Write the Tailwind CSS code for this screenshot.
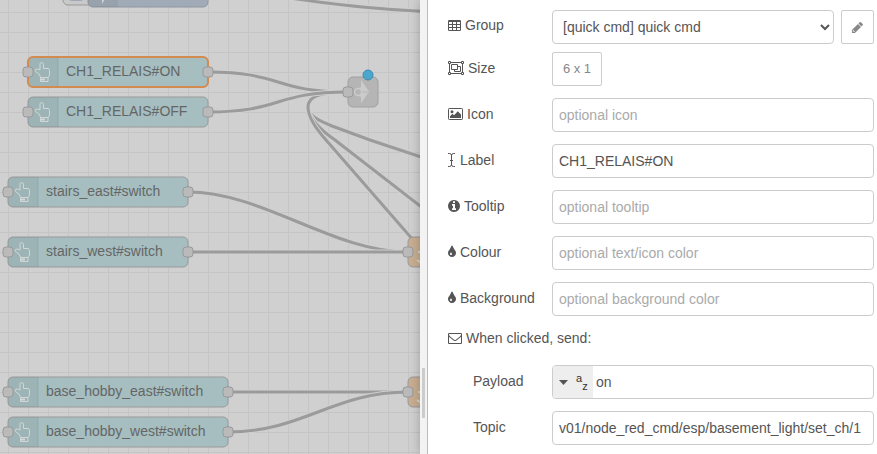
<!DOCTYPE html>
<html lang="en">
<head>
<meta charset="utf-8">
<meta name="viewport" content="width=device-width, initial-scale=1">
<title>Edit button node</title>
<script src="https://cdn.jsdelivr.net/npm/@tailwindcss/browser@4"></script>
</head>
<body class="bg-white font-['Liberation_Sans',Arial,sans-serif] text-sm leading-5 text-[#555]">
<div class="grid min-h-screen grid-cols-[minmax(0,420fr)_minmax(0,457fr)]">

  <!-- Flow canvas -->
  <main class="relative overflow-hidden bg-[#d0d0d0]" aria-label="Flow">
    <svg class="absolute inset-0 h-full w-full" font-size="14" fill="none">
      <defs>
        <pattern id="grid" x="8" y="12" width="20" height="20" patternUnits="userSpaceOnUse">
          <path d="M0 .5H20M.5 0V20" stroke="#c5c5c5"/>
        </pattern>
        <g id="port"><rect x="-5" y="-5" width="10" height="10" rx="3" fill="#bababa" stroke="#999"/></g>
        <g id="hand">
          <path d="M0 5a5 5 0 0 1 5-5H30V30H5a5 5 0 0 1-5-5Z" fill="#000" fill-opacity=".05"/>
          <path d="M30 .5V29.500" stroke="#000" stroke-opacity=".08"/>
          <path d="M12 13V7.200Q12 5.500 13.500 5.500T15.500 7.200V11.500H20Q21.500 12 21.500 13.500V18L20 20.500H12.700L11 17L7.500 14.500Q6.500 13 8 12.200Q10 11.700 12 13M12.500 20.500V24.500H20V20.500" stroke="#d2d7d7"/>
          <path d="M13 22.500H17" stroke="#d2d7d7" stroke-width="2"/>
        </g>
        <g id="node180"><rect width="180" height="30" rx="5" fill="#a6bec0" stroke="#999"/><use href="#hand"/></g>
        <g id="node220"><rect width="220" height="30" rx="5" fill="#a6bec0" stroke="#999"/><use href="#hand"/></g>
        <path id="w1" d="M290 -2Q355 8 424 11.500"/>
        <path id="w2" d="M348 92C318 92 308 97 308 107C308 116 320 121 332 126L370 140L424 158"/>
        <path id="w3" d="M348 92C318 92 308 97 308 107C308 118 322 131 335 140L424 209"/>
        <path id="w4" d="M348 92C318 92 308 97 308 107C308 118 318 131 326 140L414 241"/>
        <path id="w5" d="M208 72C283 72 273 92 348 92"/>
        <path id="w6" d="M208 112C283 112 273 92 348 92"/>
        <path id="w7" d="M188 192C263 192 333 252 408 252"/>
        <path id="w8" d="M188 252H408"/>
        <path id="w9" d="M228 392H408"/>
        <path id="w10" d="M228 432C303 432 333 392 408 392"/>
      </defs>
      <rect width="100%" height="100%" fill="url(#grid)"/>

      <!-- Wires: a background-coloured outline keeps crossings readable -->
      <g stroke="#d0d0d0" stroke-width="5"><use href="#w1"/><use href="#w2"/></g>
      <g stroke="#9b9b9b" stroke-width="3"><use href="#w1"/><use href="#w2"/></g>
      <use href="#w3" stroke="#d0d0d0" stroke-width="5"/><use href="#w3" stroke="#9b9b9b" stroke-width="3"/>
      <use href="#w4" stroke="#d0d0d0" stroke-width="5"/><use href="#w4" stroke="#9b9b9b" stroke-width="3"/>
      <use href="#w5" stroke="#d0d0d0" stroke-width="5"/><use href="#w5" stroke="#9b9b9b" stroke-width="3"/>
      <use href="#w6" stroke="#d0d0d0" stroke-width="5"/><use href="#w6" stroke="#9b9b9b" stroke-width="3"/>
      <use href="#w7" stroke="#d0d0d0" stroke-width="5"/><use href="#w7" stroke="#9b9b9b" stroke-width="3"/>
      <use href="#w8" stroke="#d0d0d0" stroke-width="5"/><use href="#w8" stroke="#9b9b9b" stroke-width="3"/>
      <use href="#w9" stroke="#d0d0d0" stroke-width="5"/><use href="#w9" stroke="#9b9b9b" stroke-width="3"/>
      <use href="#w10" stroke="#d0d0d0" stroke-width="5"/><use href="#w10" stroke="#9b9b9b" stroke-width="3"/>

      <!-- Inject node -->
      <rect x="63" y="-20" width="40" height="25" rx="5" fill="#c9c9c9" stroke="#999"/>
      <rect x="68" y="-16" width="16" height="17" rx="4" fill="#a0a9b3"/>
      <rect x="88" y="-23" width="120" height="30" rx="5" fill="#a0abb7" stroke="#8f969e"/>
      <path d="M88 -23H118V7H93a5 5 0 0 1-5-5Z" fill="#000" fill-opacity=".05"/>
      <path d="M102 -3H106L102 4Z" fill="#d2d5d8"/>

      <!-- Button nodes -->
      <use href="#node180" x="28" y="57"/>
      <rect x="28" y="57" width="180" height="30" rx="5" stroke="#d38b50" stroke-width="2"/>
      <use href="#node180" x="28" y="97"/>
      <use href="#node180" x="8" y="177"/>
      <use href="#node180" x="8" y="237"/>
      <use href="#node220" x="8" y="377"/>
      <use href="#node220" x="8" y="417"/>
      <g fill="#646666">
        <text x="66" y="76">CH1_RELAIS#ON</text>
        <text x="66" y="116">CH1_RELAIS#OFF</text>
        <text x="46" y="196">stairs_east#switch</text>
        <text x="46" y="256">stairs_west#switch</text>
        <text x="46" y="396">base_hobby_east#switch</text>
        <text x="46" y="436">base_hobby_west#switch</text>
      </g>

      <!-- Link node -->
      <rect x="348" y="77" width="30" height="30" rx="5" fill="#b5b5b5" stroke="#a0a0a0"/>
      <path d="M361 80L369 91.500L361 103.500V97L357 94.500V89.500L361 87Z" fill="#cbcbcb"/>
      <path d="M362 92H368" stroke="#b5b5b5"/>
      <circle cx="358" cy="92" r="3.500" fill="#b5b5b5" stroke="#cbcbcb" stroke-width="1.500"/>
      <circle cx="368" cy="75" r="5" fill="#4ba6cd" stroke="#3d8cb0"/>

      <!-- Function nodes -->
      <rect x="408" y="237" width="60" height="30" rx="5" fill="#c8ae92" stroke="#999"/>
      <rect x="408" y="377" width="60" height="30" rx="5" fill="#c8ae92" stroke="#999"/>
      <path d="M418 252h3M417 260l4 3M418 392h3M417 400l4 3" stroke="#d8d2ca" stroke-width="2"/>

      <use href="#port" x="28" y="72"/><use href="#port" x="208" y="72"/>
      <use href="#port" x="28" y="112"/><use href="#port" x="208" y="112"/>
      <use href="#port" x="8" y="192"/><use href="#port" x="188" y="192"/>
      <use href="#port" x="8" y="252"/><use href="#port" x="188" y="252"/>
      <use href="#port" x="8" y="392"/><use href="#port" x="228" y="392"/>
      <use href="#port" x="8" y="432"/><use href="#port" x="228" y="432"/>
      <use href="#port" x="348" y="92"/><use href="#port" x="408" y="252"/><use href="#port" x="408" y="392"/>
    </svg>
  </main>

  <!-- Edit tray -->
  <aside class="relative flex shadow-[0_0_10px_rgba(0,0,0,0.25)]">
    <div class="flex w-2 shrink-0 flex-col items-center border-r border-[#bbb] bg-[#f3f3f3] pt-[368px]">
      <div class="h-[50px] w-[3px] bg-[#ccc]"></div>
    </div>
    <form class="flex min-w-0 flex-1 flex-col gap-3 bg-white pt-[10px] pr-[3px] pl-5">

      <div class="flex items-center">
        <label for="group" class="flex w-[104px] shrink-0 items-center gap-1 pb-1">
          <svg class="h-[11px] w-[13px]" viewBox="0 0 13 11" fill="currentColor" fill-rule="evenodd"><path d="M1.200 0H11.800Q13 0 13 1.200V9.800Q13 11 11.800 11H1.200Q0 11 0 9.800V1.200Q0 0 1.200 0ZM1 2V4H4V2ZM5 2V4H8V2ZM9 2V4H12V2ZM1 5V7H4V5ZM5 5V7H8V5ZM9 5V7H12V5ZM1 8V10H4V8ZM5 8V10H8V8ZM9 8V10H12V8Z"/></svg>
          Group
        </label>
        <select id="group" class="h-[34px] min-w-0 flex-1 rounded border border-[#ccc] bg-white pl-[6px] text-[#555]">
          <option>[quick cmd] quick cmd</option>
        </select>
        <button type="button" aria-label="Edit group" class="ml-[7px] flex h-[34px] w-[33px] shrink-0 items-center justify-center rounded-xs border border-[#ccc] text-[#888]">
          <svg class="size-[13px]" viewBox="0 0 1792 1792" fill="currentColor"><path d="M960 416l416 416-832 832h-416v-416zM300 1250l-60 60v100h120v120h100l60-60zM1643 512q0 53-37 90l-166 166-416-416 166-165q36-38 90-38 53 0 91 38l235 234q37 39 37 91z"/></svg>
        </button>
      </div>

      <div class="-mt-1 flex items-center">
        <label for="size" class="flex w-[104px] shrink-0 items-center gap-1 pb-[2px]">
          <svg class="h-[14px] w-4" viewBox="0 0 16 14" fill="none" stroke="currentColor"><path d="M.5 .5H2.500V2.500H.5ZM13.500 .5H15.500V2.500H13.500ZM.5 11.500H2.500V13.500H.5ZM13.500 11.500H15.500V13.500H13.500ZM3 1.500H13M3 12.500H13M1.500 3V11M14.500 3V11M3.500 3.500H9.500V8.500H3.500ZM10 5.500H12.500V10.500H6.500V9"/></svg>
          Size
        </label>
        <button type="button" id="size" class="h-[34px] w-[50px] rounded-xs border border-[#ccc] text-[13px] text-[#888]">6 x 1</button>
      </div>

      <div class="flex items-center">
        <label for="icon" class="flex w-[104px] shrink-0 items-center gap-1 pb-[2px]">
          <svg class="h-3 w-[15px]" viewBox="0 0 15 12" fill="currentColor"><rect x=".5" y=".5" width="14" height="11" rx=".8" fill="none" stroke="currentColor"/><circle cx="4" cy="3.700" r="1.500"/><path d="M2 10V8.200L4.500 5.800L6 7.200L9.800 3.200L13 6.500V10Z"/></svg>
          Icon
        </label>
        <input id="icon" type="text" placeholder="optional icon" class="h-[34px] min-w-0 flex-1 rounded border border-[#ccc] px-[6px] placeholder:text-[#aaa]">
      </div>

      <div class="flex items-center">
        <label for="label" class="flex w-[104px] shrink-0 items-center gap-[5px] pb-[2px]">
          <svg class="h-[14px] w-[7px]" viewBox="0 0 7 14" fill="none" stroke="currentColor"><path d="M0 .5H1.500Q3.500 .5 3.500 2.500Q3.500 .5 5.500 .5H7M0 13.500H1.500Q3.500 13.500 3.500 11.500Q3.500 13.500 5.500 13.500H7M3.500 2V12M2 7.500H5"/></svg>
          Label
        </label>
        <input id="label" type="text" value="CH1_RELAIS#ON" class="h-[34px] min-w-0 flex-1 rounded border border-[#ccc] px-[6px]">
      </div>

      <div class="flex items-center">
        <label for="tooltip" class="flex w-[104px] shrink-0 items-center gap-1 pb-[2px]">
          <svg class="size-3" viewBox="128 128 1536 1536" fill="currentColor"><path d="M1152 1376v-160q0-14-9-23t-23-9h-96v-512q0-14-9-23t-23-9h-320q-14 0-23 9t-9 23v160q0 14 9 23t23 9h96v320h-96q-14 0-23 9t-9 23v160q0 14 9 23t23 9h448q14 0 23-9t9-23zm-128-896v-160q0-14-9-23t-23-9h-192q-14 0-23 9t-9 23v160q0 14 9 23t23 9h192q14 0 23-9t9-23zm640 416q0 209-103 385.5t-279.5 279.5-385.5 103-385.5-103-279.5-279.5-103-385.5 103-385.5 279.5-279.5 385.5-103 385.5 103 279.5 279.5 103 385.5z"/></svg>
          Tooltip
        </label>
        <input id="tooltip" type="text" placeholder="optional tooltip" class="h-[34px] min-w-0 flex-1 rounded border border-[#ccc] px-[6px] placeholder:text-[#aaa]">
      </div>

      <div class="flex items-center">
        <label for="colour" class="flex w-[104px] shrink-0 items-center gap-1 pb-[2px]">
          <svg class="h-[14px] w-2" viewBox="384 0 1024 1792" fill="currentColor"><path d="M896 1152q0-36-20-69-1-1-15.500-22.500t-25.500-38-25-44-21-50.500q-4-16-21-16t-21 16q-7 23-21 50.500t-25 44-25.500 38-15.500 22.500q-20 33-20 69 0 53 37.500 90.500t90.500 37.500 90.500-37.500 37.500-90.500zm512-128q0 212-150 362t-362 150-362-150-150-362q0-145 81-275 6-9 62.500-90.500t101-151 99.500-178 83-201.500q9-30 34-47t51-17 51.500 17 33.500 47q28 93 83 201.500t99.500 178 101 151 62.500 90.500q81 127 81 275z"/></svg>
          Colour
        </label>
        <input id="colour" type="text" placeholder="optional text/icon color" class="h-[34px] min-w-0 flex-1 rounded border border-[#ccc] px-[6px] placeholder:text-[#aaa]">
      </div>

      <div class="flex items-center">
        <label for="background" class="flex w-[104px] shrink-0 items-center gap-1 pb-[2px]">
          <svg class="h-[14px] w-2" viewBox="384 0 1024 1792" fill="currentColor"><path d="M896 1152q0-36-20-69-1-1-15.500-22.500t-25.500-38-25-44-21-50.500q-4-16-21-16t-21 16q-7 23-21 50.500t-25 44-25.500 38-15.500 22.500q-20 33-20 69 0 53 37.500 90.500t90.500 37.500 90.500-37.500 37.500-90.500zm512-128q0 212-150 362t-362 150-362-150-150-362q0-145 81-275 6-9 62.500-90.500t101-151 99.500-178 83-201.500q9-30 34-47t51-17 51.500 17 33.500 47q28 93 83 201.500t99.500 178 101 151 62.500 90.500q81 127 81 275z"/></svg>
          Background
        </label>
        <input id="background" type="text" placeholder="optional background color" class="h-[34px] min-w-0 flex-1 rounded border border-[#ccc] px-[6px] placeholder:text-[#aaa]">
      </div>

      <p class="mb-[5px] flex items-center gap-1">
        <svg class="size-[14px]" viewBox="0 0 1792 1792" fill="currentColor"><path d="M1664 1504v-768q-32 36-69 66-268 206-426 338-51 43-83 67t-86.500 48.500-102.500 24.500h-2q-48 0-102.500-24.500t-86.500-48.500-83-67q-158-132-426-338-37-30-69-66v768q0 13 9.500 22.500t22.500 9.500h1472q13 0 22.500-9.500t9.500-22.500zm0-1051v-24.500l-.5-13-3-12.500-5.500-9-9-7.500-14-2.500h-1472q-13 0-22.500 9.500t-9.500 22.500q0 168 147 284 193 152 401 317 6 5 35 29.500t46 37.500 44.500 31.500 50.500 27.500 43 9h2q20 0 43-9t50.500-27.500 44.500-31.500 46-37.500 35-29.500q208-165 401-317 54-43 100.500-115.500t46.500-131.500zm128-37v1088q0 66-47 113t-113 47h-1472q-66 0-113-47t-47-113v-1088q0-66 47-113t113-47h1472q66 0 113 47t47 113z"/></svg>
        When clicked, send:
      </p>

      <div class="flex items-center">
        <label for="payload" class="w-[104px] shrink-0 pb-[2px] pl-[25px]">Payload</label>
        <div class="flex h-[34px] min-w-0 flex-1 overflow-hidden rounded border border-[#ccc]">
          <button type="button" aria-label="Payload type" class="flex w-10 shrink-0 items-center gap-2 bg-[#eee] pl-[6px]">
            <svg class="h-[5px] w-[9px]" viewBox="0 0 9 5" fill="currentColor"><path d="M0 0H9L4.500 5Z"/></svg>
            <span class="flex items-start text-[11px] leading-3 text-[#333]"><span class="pb-2">a</span><span class="pt-2">z</span></span>
          </button>
          <input id="payload" type="text" value="on" class="min-w-0 flex-1 px-[3px]">
        </div>
      </div>

      <div class="flex items-center">
        <label for="topic" class="w-[104px] shrink-0 pb-[2px] pl-[25px]">Topic</label>
        <input id="topic" type="text" value="v01/node_red_cmd/esp/basement_light/set_ch/1" class="h-[34px] min-w-0 flex-1 rounded border border-[#ccc] px-[6px]">
      </div>
    </form>
  </aside>
</div>
</body>
</html>
